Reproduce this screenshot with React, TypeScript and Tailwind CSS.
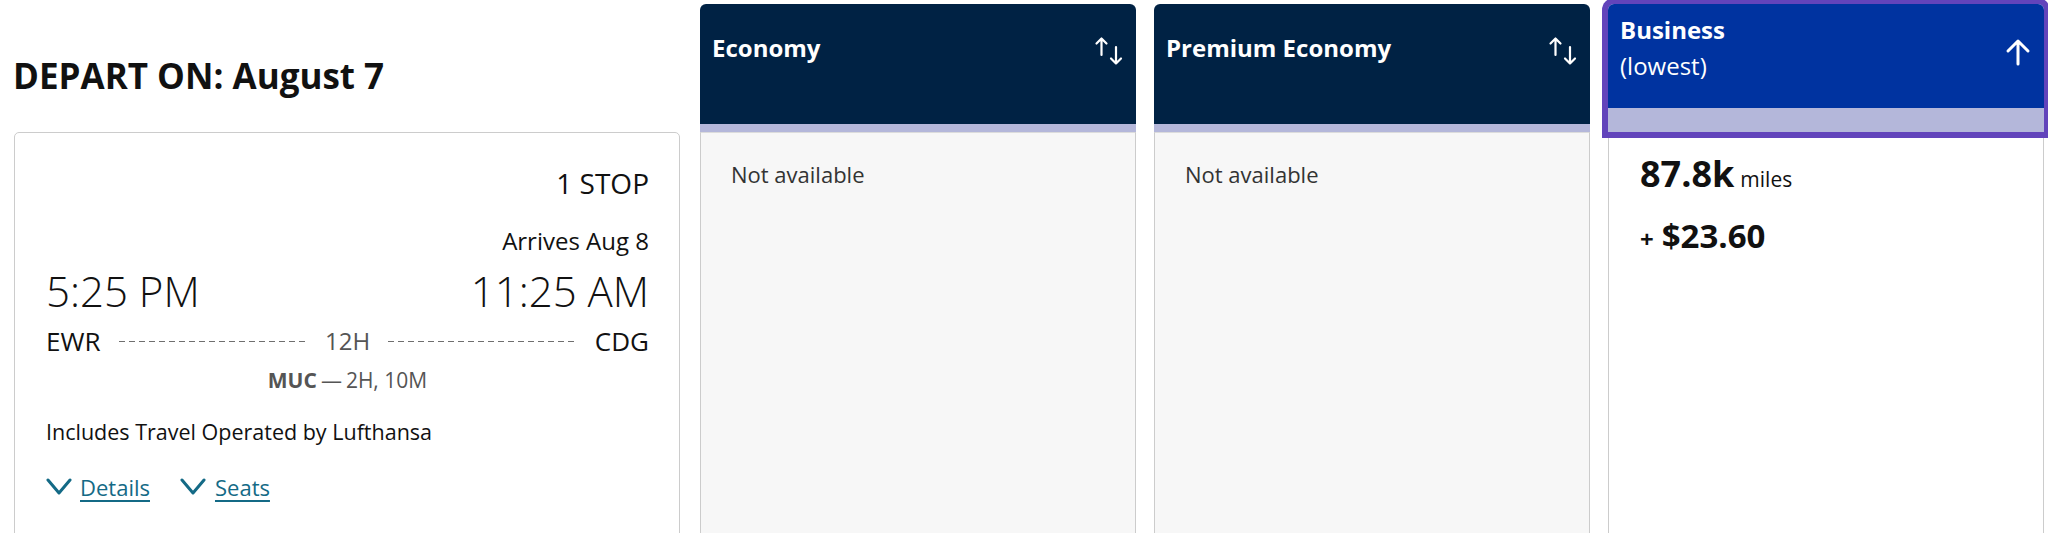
import type { ReactNode } from "react";

const FONT = "font-['Open_Sans','Noto_Sans',sans-serif]";

function SortIcon() {
  return (
    <svg width="32" height="30" viewBox="0 0 32 30" fill="none" stroke="white" strokeWidth="2.2" strokeLinecap="round" strokeLinejoin="round">
      <path d="M7.5 19V2.5M2.5 7.5L7.5 2.5L12.5 7.5" />
      <path d="M22 11V27.5M17 22.5L22 27.5L27 22.5" />
    </svg>
  );
}

function UpArrow() {
  return (
    <svg width="26" height="28" viewBox="0 0 26 28" fill="none" stroke="white" strokeWidth="3" strokeLinecap="round" strokeLinejoin="round">
      <path d="M13 26V3M3 13L13 3L23 13" />
    </svg>
  );
}

function Chevron() {
  return (
    <svg width="26" height="18" viewBox="0 0 26 18" fill="none" stroke="#146a86" strokeWidth="3" strokeLinecap="round" strokeLinejoin="round">
      <path d="M2 2L13 15L24 2" />
    </svg>
  );
}

function Dashes() {
  return <div className="flex-1 h-px bg-[repeating-linear-gradient(90deg,#6f6f6f_0_6px,transparent_6px_10px)]" />;
}

function FareColumn({ title, children }: { title: string; children?: ReactNode }) {
  return (
    <div className="w-[436px] shrink-0 flex flex-col pt-[4px]">
      <div className="shrink-0 rounded-t-[6px] bg-[#002244] h-[120px] flex items-start justify-between pl-[12px] pr-[10px] pt-[28px]">
        <span className="text-white font-bold text-[24px] leading-[32px]">{title}</span>
        <span className="mt-[4px]">
          <SortIcon />
        </span>
      </div>
      <div className="shrink-0 h-[8px] bg-[#b4b7da]" />
      <div className="shrink-0 h-[500px] bg-[#f7f7f7] border border-t-[#dcdcdc] border-[#cccccc] rounded-b-[6px] pl-[30px] pt-[26px]">
        {children}
      </div>
    </div>
  );
}

export default function App() {
  return (
    <div className={`w-[2048px] h-[533px] overflow-hidden bg-white flex items-start ${FONT}`}>
      {/* left: date + flight card */}
      <div className="w-[666px] ml-[14px] shrink-0 flex flex-col">
        <h2 className="mt-[53px] -ml-[1px] text-[35px] leading-[46px] font-bold text-[#111]">DEPART ON: August 7</h2>
        <div className="shrink-0 mt-[33px] h-[420px] border border-[#cccccc] rounded-[5px] pl-[31px] pr-[30px] pt-[30px] text-[#111]">
          <div className="text-right text-[28px] leading-[40px]">1 STOP</div>
          <div className="mt-[22px] text-right text-[24px] leading-[32px]">Arrives Aug 8</div>
          <div className="mt-[10px] flex justify-between text-[42px] leading-[48px] font-light">
            <span>5:25 PM</span>
            <span>11:25 AM</span>
          </div>
          <div className="mt-[9px] flex items-center gap-[18px] text-[26px] leading-[34px]">
            <span>EWR</span>
            <Dashes />
            <span className="text-[24px] text-[#555]">12H</span>
            <Dashes />
            <span>CDG</span>
          </div>
          <div className="mt-[8px] flex justify-center items-baseline gap-[4px] text-[21px] leading-[28px] text-[#555]">
            <span className="font-bold">MUC</span>
            <span>—</span>
            <span>2H, 10M</span>
          </div>
          <div className="mt-[24px] text-[21.5px] leading-[28px] text-[#111]">Includes Travel Operated by Lufthansa</div>
          <div className="mt-[26px] flex items-center text-[22px] leading-[30px] text-[#146a86]">
            <Chevron />
            <span className="ml-[8px] underline underline-offset-[4px]">Details</span>
            <span className="ml-[30px]">
              <Chevron />
            </span>
            <span className="ml-[9px] underline underline-offset-[4px]">Seats</span>
          </div>
        </div>
      </div>

      {/* fare columns */}
      <div className="ml-[20px] flex items-start gap-[18px]">
        <FareColumn title="Economy">
          <span className="text-[22px] leading-[30px] text-[#333]">Not available</span>
        </FareColumn>
        <FareColumn title="Premium Economy">
          <span className="text-[22px] leading-[30px] text-[#333]">Not available</span>
        </FareColumn>

        <div className="w-[436px] shrink-0 flex flex-col pt-[4px]">
          <div className="shrink-0 relative z-10 rounded-t-[6px] ring-[6px] ring-[#6244bb]">
            <div className="rounded-t-[6px] bg-[#0033a0] h-[104px] flex items-start justify-between pl-[12px] pr-[13px] pt-[8px]">
              <div className="text-white text-[24px] leading-[36px]">
                <div className="font-bold">Business</div>
                <div>(lowest)</div>
              </div>
              <span className="mt-[26px]">
                <UpArrow />
              </span>
            </div>
            <div className="h-[24px] bg-[#b4b7da]" />
          </div>
          <div className="shrink-0 h-[500px] bg-white border border-t-0 border-[#cccccc] rounded-b-[6px] pl-[31px] pt-[24px] text-[#111]">
            <div className="flex items-baseline gap-[6px]">
              <span className="text-[36px] leading-[36px] font-bold">87.8k</span>
              <span className="text-[21px]">miles</span>
            </div>
            <div className="mt-[23px] flex items-baseline gap-[8px]">
              <span className="text-[24px] leading-[33px] font-bold">+</span>
              <span className="text-[33px] leading-[33px] font-bold">$23.60</span>
            </div>
          </div>
        </div>
      </div>
    </div>
  );
}
